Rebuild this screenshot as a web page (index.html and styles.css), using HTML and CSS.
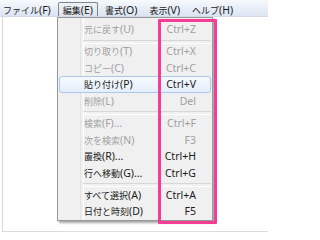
FILE: index.html
```html
<!DOCTYPE html>
<html lang="ja">
<head>
<meta charset="utf-8">
<title>メモ帳 編集メニュー</title>
<link rel="stylesheet" href="styles.css">
</head>
<body>
<div class="window">
  <div class="menubar">
    <div class="mb-item first"><span class="ja">ファイル</span>(F)</div>
    <div class="mb-item open"><span class="ja">編集</span>(E)</div>
    <div class="mb-item"><span class="ja">書式</span>(O)</div>
    <div class="mb-item"><span class="ja">表示</span>(V)</div>
    <div class="mb-item"><span class="ja">ヘルプ</span>(H)</div>
  </div>
  <div class="client"></div>

  <div class="menu">
    <div class="item dis"><span class="label"><span class="ja">元に戻す</span>(U)</span><span class="key">Ctrl+Z</span></div>
    <div class="sep"></div>
    <div class="item dis"><span class="label"><span class="ja">切り取り</span>(T)</span><span class="key">Ctrl+X</span></div>
    <div class="item dis"><span class="label"><span class="ja">コピー</span>(C)</span><span class="key">Ctrl+C</span></div>
    <div class="item hot"><span class="label"><span class="ja">貼り付け</span>(P)</span><span class="key">Ctrl+V</span></div>
    <div class="item dis"><span class="label"><span class="ja">削除</span>(L)</span><span class="key">Del</span></div>
    <div class="sep"></div>
    <div class="item dis"><span class="label"><span class="ja">検索</span>(F)...</span><span class="key">Ctrl+F</span></div>
    <div class="item dis"><span class="label"><span class="ja">次を検索</span>(N)</span><span class="key">F3</span></div>
    <div class="item"><span class="label"><span class="ja">置換</span>(R)...</span><span class="key">Ctrl+H</span></div>
    <div class="item"><span class="label"><span class="ja">行へ移動</span>(G)...</span><span class="key">Ctrl+G</span></div>
    <div class="sep"></div>
    <div class="item"><span class="label"><span class="ja">すべて選択</span>(A)</span><span class="key">Ctrl+A</span></div>
    <div class="item"><span class="label"><span class="ja">日付と時刻</span>(D)</span><span class="key">F5</span></div>
  </div>

  <div class="highlight-box"></div>
</div>
</body>
</html>
```

FILE: styles.css
```css
* { box-sizing: border-box; }

html, body {
  margin: 0;
  padding: 0;
  background: #ffffff;
}

body {
  width: 268px;
  height: 237px;
  overflow: hidden;
  font-family: "Noto Sans", "Noto Sans CJK JP", sans-serif;
  font-size: 10.5px;
  color: #1b1b1b;
}

.ja {
  font-family: "Noto Sans CJK JP", sans-serif;
  font-size: 9px;
}

.window {
  position: relative;
  width: 268px;
  height: 237px;
}

/* ---------- menu bar ---------- */
.menubar {
  height: 17px;
  display: flex;
  align-items: stretch;
  gap: 2px;
  padding-top: 2px;
  background: linear-gradient(#f7fafd 0%, #e9eff8 45%, #dbe5f2 100%);
  border-bottom: 1px solid #d3dbe7;
}

.mb-item {
  padding: 0 4px;
  line-height: 14px;
  white-space: nowrap;
  border: 1px solid transparent;
  border-bottom: none;
}

.mb-item.first {
  margin-left: -2px;
}

.mb-item.open {
  border-color: #7e848c;
  border-radius: 2px 2px 0 0;
  background: linear-gradient(#eef2f7, #dde4ed);
}

/* ---------- client area ---------- */
.client {
  height: 215px;
  margin-left: 2px;
  border-left: 1px solid #d8d8d8;
  border-bottom: 1px solid #dcdcdc;
  background: #ffffff;
}

/* ---------- dropdown ---------- */
.menu {
  position: absolute;
  left: 57px;
  top: 17px;
  width: 156px;
  height: 204px;
  padding: 3px 1px 1px 1px;
  background: #f0f0f0;
  border: 1px solid #979797;
  box-shadow: 2px 2px 2px rgba(0, 0, 0, 0.35);
}

.menu::before {
  content: "";
  position: absolute;
  left: 22px;
  top: 0;
  bottom: 0;
  width: 2px;
  border-left: 1px solid #e2e3e3;
  border-right: 1px solid #ffffff;
}

.item {
  position: relative;
  height: 16.5px;
  display: flex;
  align-items: center;
  justify-content: space-between;
  padding: 0 14px 0 24px;
  white-space: nowrap;
  border: 1px solid transparent;
  border-radius: 3px;
}

.item.dis {
  color: #a0a0a0;
}

.item.hot {
  border-color: #a8c8ee;
  background: linear-gradient(#f5f9fe, #e4eefb);
}

.sep {
  position: relative;
  height: 5.7px;
  margin-left: 24px;
}

.sep::after {
  content: "";
  position: absolute;
  left: 0;
  right: 0;
  top: 2px;
  height: 2px;
  border-top: 1px solid #d7d7d7;
  border-bottom: 1px solid #ffffff;
}

/* ---------- annotation ---------- */
.highlight-box {
  position: absolute;
  left: 158px;
  top: 19px;
  width: 59px;
  height: 205px;
  border: 3px solid #f53d95;
  border-radius: 1px;
}
```
